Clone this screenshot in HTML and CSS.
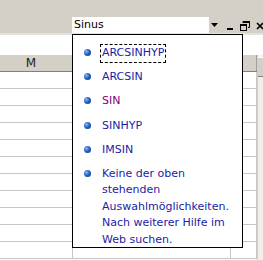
FILE: index.html
```html
<!DOCTYPE html>
<html>
<head>
<meta charset="utf-8">
<link rel="stylesheet" href="styles.css">
</head>
<body>
<div class="app">
  <div class="menubar">
    <div class="askbox">
      <span class="ask-text">Sinus</span>
      <span class="ask-arrow"><svg width="7" height="4" viewBox="0 0 7 4"><path d="M0 0H7L3.5 4Z" fill="#000"/></svg></span>
    </div>
    <div class="wincontrols">
      <svg class="ctl-min" width="8" height="10" viewBox="0 0 8 10"><rect x="1" y="7" width="6" height="2" fill="#000"/></svg>
      <svg class="ctl-restore" width="10" height="10" viewBox="0 0 10 10"><path d="M3 0.5H9.5V6.5H8M3 0.5V2" fill="none" stroke="#000"/><rect x="3" y="0" width="7" height="2" fill="#000"/><rect x="0.5" y="3.5" width="6" height="6" fill="none" stroke="#000"/><rect x="0" y="3" width="7" height="2" fill="#000"/></svg>
      <svg class="ctl-close" width="8" height="10" viewBox="0 0 8 10"><path d="M1 2L7 8M7 2L1 8" stroke="#000" stroke-width="1.6"/></svg>
    </div>
  </div>
  <div class="formula"></div>
  <div class="sheet">
    <div class="grid">
      <div class="row head"><div class="cell c1">M</div><div class="cell c2"></div><div class="cell c3"></div></div>
      <div class="row"><div class="cell c1"></div><div class="cell c2"></div><div class="cell c3"></div></div>
      <div class="row"><div class="cell c1"></div><div class="cell c2"></div><div class="cell c3"></div></div>
      <div class="row"><div class="cell c1"></div><div class="cell c2"></div><div class="cell c3"></div></div>
      <div class="row"><div class="cell c1"></div><div class="cell c2"></div><div class="cell c3"></div></div>
      <div class="row"><div class="cell c1"></div><div class="cell c2"></div><div class="cell c3"></div></div>
      <div class="row"><div class="cell c1"></div><div class="cell c2"></div><div class="cell c3"></div></div>
      <div class="row"><div class="cell c1"></div><div class="cell c2"></div><div class="cell c3"></div></div>
      <div class="row"><div class="cell c1"></div><div class="cell c2"></div><div class="cell c3"></div></div>
      <div class="row"><div class="cell c1"></div><div class="cell c2"></div><div class="cell c3"></div></div>
      <div class="row"><div class="cell c1"></div><div class="cell c2"></div><div class="cell c3"></div></div>
      <div class="row"><div class="cell c1"></div><div class="cell c2"></div><div class="cell c3"></div></div>
    </div>
    <div class="vscroll"><div class="vs-btn"></div></div>
  </div>

  <div class="popup">
    <ul class="items">
      <li class="item"><span class="bullet"></span><span class="label focus">ARCSINHYP</span></li>
      <li class="item"><span class="bullet"></span><span class="label">ARCSIN</span></li>
      <li class="item"><span class="bullet"></span><span class="label visited">SIN</span></li>
      <li class="item"><span class="bullet"></span><span class="label">SINHYP</span></li>
      <li class="item"><span class="bullet"></span><span class="label">IMSIN</span></li>
      <li class="item"><span class="bullet"></span><span class="label">Keine der oben<br>stehenden<br>Auswahlmöglichkeiten.<br>Nach weiterer Hilfe im<br>Web suchen.</span></li>
    </ul>
  </div>
</div>
</body>
</html>
```
FILE: styles.css
```css
* { box-sizing: border-box; }
html, body { margin: 0; padding: 0; }
body {
  width: 263px;
  height: 260px;
  overflow: hidden;
  background: #fff;
  font-family: "DejaVu Sans", Tahoma, sans-serif;
  font-size: 11px;
}
.app {
  position: relative;
  width: 263px;
  height: 260px;
  display: flex;
  flex-direction: column;
  overflow: hidden;
}
.menubar {
  height: 35px;
  background: #d4d0c8;
  border-bottom: 2px solid #e6e3dc;
  display: flex;
  align-items: flex-start;
  padding-left: 72px;
}
.askbox {
  flex: none;
  margin-top: 17px;
  width: 148px;
  height: 16px;
  background: #fff;
  display: flex;
  align-items: center;
  justify-content: space-between;
  padding-left: 2px;
}
.ask-text {
  font-size: 11px;
  color: #000;
  line-height: 16px;
}
.ask-arrow {
  width: 11px;
  height: 16px;
  background: #d4d0c8;
  display: flex;
  align-items: center;
  justify-content: center;
}
.wincontrols {
  flex: none;
  display: flex;
  align-items: center;
  margin-top: 21px;
  margin-left: 6px;
  gap: 6px;
}
.wincontrols svg { flex: none; }
.formula {
  height: 20px;
  background: #fff;
}
.sheet {
  flex: 1;
  display: flex;
}
.grid { flex: 1; display: flex; flex-direction: column; }
.row {
  display: flex;
  height: 17px;
  border-bottom: 1px solid #c7c7c7;
}
.row.head {
  height: 17px;
  background: #d4d0c8;
  border-bottom: 1px solid #808080;
}
.cell { border-right: 1px solid #c7c7c7; }
.row.head .cell { border-right-color: #a0a0a0; }
.c1 { width: 73px; text-align: center; line-height: 16px; color: #222; padding-right: 10px; font-size: 12px; }
.c2 { width: 158px; }
.c3 { flex: 1; }
.vscroll {
  width: 6px;
  background: #f1efe8;
  border-left: 1px solid #d4d0c8;
}
.vs-btn {
  height: 20px;
  margin-top: 2px;
  background: #d4d0c8;
  border-top: 1px solid #fff;
  border-bottom: 1px solid #808080;
}
.popup {
  position: absolute;
  left: 72px;
  top: 34px;
  width: 171px;
  height: 214px;
  background: #fff;
  border: 1px solid #000;
}
.items {
  list-style: none;
  margin: 0;
  padding: 9px 0 0 0;
  display: flex;
  flex-direction: column;
  gap: 5.7px;
}
.item {
  display: flex;
  align-items: flex-start;
  padding-left: 11px;
}
.bullet {
  width: 7px;
  height: 7px;
  margin-top: 5px;
  margin-right: 10px;
  flex: none;
  border-radius: 50%;
  background: radial-gradient(circle at 35% 35%, #8fb8f0 0, #2a62c0 45%, #0a2f78 100%);
}
.label {
  color: #1b1ba6;
  line-height: 16.5px;
  border: 1px solid transparent;
  margin-left: -1px;
  padding: 0 1px;
}
.label.focus {
  border: 1px dashed #000;
}
.label.visited { color: #800080; }
```
